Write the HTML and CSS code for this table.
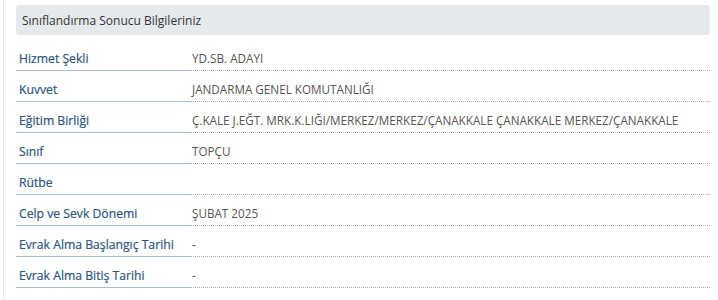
FILE: index.html
```html
<!DOCTYPE html>
<html lang="tr">
<head>
<meta charset="utf-8">
<link rel="stylesheet" href="styles.css">
</head>
<body>
<div class="panel">
  <div class="title">Sınıflandırma Sonucu Bilgileriniz</div>
  <div class="table">
    <div class="row"><div class="label">Hizmet Şekli</div><div class="value">YD.SB. ADAYI</div></div>
    <div class="row"><div class="label">Kuvvet</div><div class="value">JANDARMA GENEL KOMUTANLIĞI</div></div>
    <div class="row"><div class="label">Eğitim Birliği</div><div class="value">Ç.KALE J.EĞT. MRK.K.LIĞI/MERKEZ/MERKEZ/ÇANAKKALE ÇANAKKALE MERKEZ/ÇANAKKALE</div></div>
    <div class="row"><div class="label">Sınıf</div><div class="value">TOPÇU</div></div>
    <div class="row"><div class="label">Rütbe</div><div class="value"></div></div>
    <div class="row"><div class="label">Celp ve Sevk Dönemi</div><div class="value">ŞUBAT 2025</div></div>
    <div class="row"><div class="label">Evrak Alma Başlangıç Tarihi</div><div class="value">-</div></div>
    <div class="row"><div class="label">Evrak Alma Bitiş Tarihi</div><div class="value">-</div></div>
  </div>
</div>
</body>
</html>
```
FILE: styles.css
```css
html, body {
  margin: 0;
  padding: 0;
  background: #fff;
}
body {
  font-family: "Open Sans", "Noto Sans", sans-serif;
  font-size: 12px;
}
.panel {
  margin-left: 3px;
  border-left: 1px solid #e8e8e8;
  padding: 5px 8px 20px 12px;
  width: 694px;
}
.title {
  background: #e6e9ec;
  border-radius: 3px;
  height: 30px;
  line-height: 31px;
  padding-left: 6px;
  color: #333;
  font-size: 12px;
}
.table {
  margin-top: 5px;
}
.row {
  display: flex;
  height: 31px;
  align-items: stretch;
}
.label {
  box-sizing: border-box;
  width: 174px;
  padding: 7px 0 0 3px;
  border-bottom: 1px solid #a7c0d3;
  color: #2c5580;
  font-size: 12.2px;
  line-height: 23px;
  -webkit-text-stroke: 0.2px #2c5580;
}
.value {
  flex: 1;
  padding: 6px 0 0 2px;
  border-bottom: 1px dotted #a5afb8;
  color: #555;
  font-size: 11.7px;
  line-height: 24px;
}
```
